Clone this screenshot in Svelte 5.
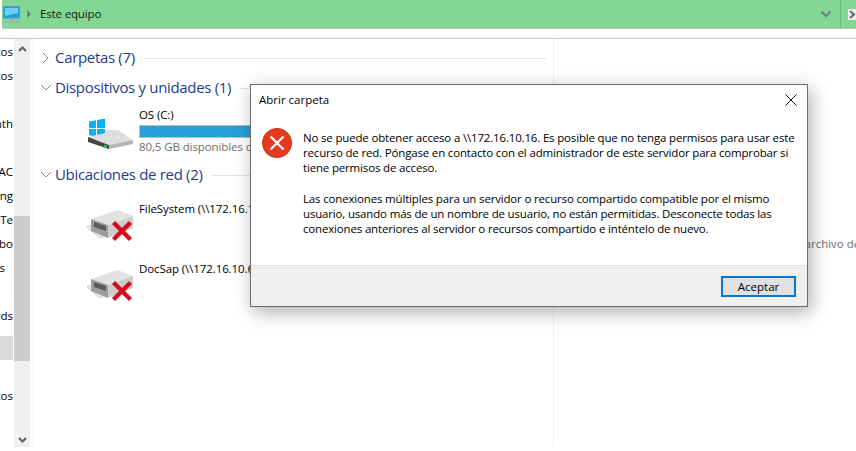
<script>
  // clipped tails of the navigation tree, the pane is scrolled sideways
  const navRows = [
    { text: "Documentos" }, { text: "Proyectos" }, { text: "" }, { text: "Month" },
    { text: "" }, { text: "MAC" }, { text: "Pricing" }, { text: "Te" }, { text: "Jobo" },
    { text: "Fotoss", short: true }, { text: "" }, { text: "Records" }
  ];
  const navRowsEnd = [{ text: "", selected: true }, { text: "" }, { text: "Documentos" }];

  const paragraphs = [
    [
      "No se puede obtener acceso a \\\\172.16.10.16. Es posible que no tenga permisos para usar este",
      "recurso de red. Póngase en contacto con el administrador de este servidor para comprobar si",
      "tiene permisos de acceso."
    ],
    [
      "Las conexiones múltiples para un servidor o recurso compartido compatible por el mismo",
      "usuario, usando más de un nombre de usuario, no están permitidas. Desconecte todas las",
      "conexiones anteriores al servidor o recursos compartido e inténtelo de nuevo."
    ]
  ];
</script>

{#snippet netDrive()}
  <svg class="drive" width="50" height="36" viewBox="0 0 50 36">
    <path d="M1 20l4-2 11 8 1 4-3 1z" fill="#efefef" stroke="#bdbdbd" stroke-width="0.8" />
    <path d="M5 12L32 3l15 6-25 9z" fill="#e2e2e2" />
    <path d="M5 12l17 6v13L5 24z" fill="#9c9c9c" />
    <path d="M22 18L47 9v12L22 31z" fill="#cdcdcd" />
    <path d="M8 15l12 4v5L8 20z" fill="#5a5a5a" />
    <path d="M27.500 15.500l17 17M44.500 15.500l-17 17" stroke="#d40e1d" stroke-width="4.400" />
  </svg>
{/snippet}

{#snippet sectionHead(title, open)}
  <div class="head">
    <svg class="caret" width="12" height="14" viewBox="0 0 12 14">
      {#if open}
        <path d="M1 4l5 5 5-5" />
      {:else}
        <path d="M3 2l5 5-5 5" />
      {/if}
    </svg>
    <span class="head-title">{title}</span>
    <span class="head-line"></span>
  </div>
{/snippet}

<div class="window">
  <header class="crumbs">
    <svg class="pc" width="17" height="17" viewBox="0 0 17 17">
      <rect x="0.5" y="0.5" width="16" height="11.500" fill="#1f9fe0" stroke="#5f97b8" />
      <path d="M2 2h13v5L2 10z" fill="#6fd0f5" />
      <path d="M6 12h5v2H6z" fill="#8fa3b0" />
      <path d="M1 15h15v1.500H1z" fill="#9db0bd" />
    </svg>
    <svg class="sep" width="6" height="8" viewBox="0 0 6 8"><path d="M1 0l4 4-4 4z" fill="#777" /></svg>
    <span class="crumb">Este equipo</span>
    <svg class="drop" width="12" height="8" viewBox="0 0 12 8"><path d="M1.500 1.500L6 6l4.500-4.500" /></svg>
    <span class="crumb-x">
      <svg width="8" height="11" viewBox="0 0 8 11"><path d="M2 2l4 3.500L2 9" /></svg>
    </span>
  </header>
  <div class="gap"></div>

  <div class="main">
    <nav class="tree">
      <div class="tree-rows">
        {#each navRows as row}
          <div class="tree-row" class:short={row.short}>{row.text}</div>
        {/each}
      </div>
      <div class="tree-rows end">
        {#each navRowsEnd as row}
          <div class="tree-row" class:selected={row.selected}>{row.text}</div>
        {/each}
      </div>
    </nav>

    <div class="scroll">
      <svg width="9" height="6" viewBox="0 0 9 6"><path d="M1 5l3.500-3.500L8 5" /></svg>
      <div class="thumb"></div>
      <svg width="9" height="6" viewBox="0 0 9 6"><path d="M1 1l3.500 3.500L8 1" /></svg>
    </div>

    <section class="content">
      {@render sectionHead("Carpetas (7)", false)}
      {@render sectionHead("Dispositivos y unidades (1)", true)}
      <div class="item os">
        <svg class="drive" width="50" height="36" viewBox="0 0 50 36">
          <path d="M1 3.500l7-1.200V10H1zM9 2l8-1.400V10H9zM1 11h7v7.500l-7-1.200zM9 11h8v9l-8-1.300z" fill="#0ab0f0" />
          <path d="M0 19l17-4v-3h13l15 10-24 5z" fill="#dedede" />
          <path d="M0 19l21 8v4L0 24z" fill="#474747" />
          <path d="M21 27l24-5v4l-24 5z" fill="#b4b4b4" />
          <rect x="16" y="27" width="3" height="2" fill="#2fc45a" />
        </svg>
        <div class="item-text">
          <div class="item-name">OS (C:)</div>
          <div class="bar"><div class="fill" style="width: 90%"></div></div>
          <div class="item-sub">80,5 GB disponibles de 237 GB</div>
        </div>
      </div>
      {@render sectionHead("Ubicaciones de red (2)", true)}
      <div class="item net">
        {@render netDrive()}
        <div class="item-name">FileSystem (\\172.16.10.16) (Z:)</div>
      </div>
      <div class="item net">
        {@render netDrive()}
        <div class="item-name">DocSap (\\172.16.10.6) (Y:)</div>
      </div>
    </section>

    <aside class="preview">Seleccione un archivo de</aside>
  </div>

  <div class="dialog" role="alertdialog">
    <div class="dlg-title">
      <span>Abrir carpeta</span>
      <svg width="12" height="12" viewBox="0 0 12 12"><path d="M.5.5l11 11M11.500.5l-11 11" /></svg>
    </div>
    <div class="dlg-body">
      <svg class="err" width="30" height="30" viewBox="0 0 30 30">
        <circle cx="15" cy="15" r="14.700" fill="#e6391f" />
        <circle cx="15" cy="15" r="14.500" fill="none" stroke="#c23a22" />
        <path d="M8.500 8.500l13 13M21.500 8.500l-13 13" stroke="#fff" stroke-width="2.300" />
      </svg>
      <div class="dlg-text">
        {#each paragraphs as lines}
          <p>
            {#each lines as line}
              <span class="line">{line}</span>
            {/each}
          </p>
        {/each}
      </div>
    </div>
    <div class="dlg-foot">
      <button>Aceptar</button>
    </div>
  </div>
</div>

<style>
  :global(body) {
    margin: 0;
    background: #fff;
  }

  .window {
    position: relative;
    width: 856px;
    height: 451px;
    overflow: hidden;
    font-family: "Open Sans", "Noto Sans", sans-serif;
    font-size: 11.5px;
    color: #000;
    display: flex;
    flex-direction: column;
  }

  .crumbs {
    height: 28px;
    margin-left: 2px;
    background: #83d795;
    border-bottom: 1px solid #c4c4c4;
    display: flex;
    align-items: center;
    flex-shrink: 0;
  }

  .pc {
    margin-left: 1px;
  }

  .sep {
    margin-left: 6px;
  }

  .crumb {
    margin: 0 0 2px 8px;
    letter-spacing: -0.15px;
    color: #101a10;
  }

  .drop {
    margin-left: auto;
    fill: none;
    stroke: #6f7f72;
    stroke-width: 2;
  }

  .crumb-x {
    margin-left: 8px;
    width: 15px;
    height: 100%;
    border-left: 1px solid #70b580;
    display: flex;
    align-items: center;
    justify-content: flex-end;
  }

  .crumb-x svg {
    background: #eee;
    fill: none;
    stroke: #666;
    stroke-width: 2;
  }

  .gap {
    height: 9px;
    border-bottom: 1px solid #c8c8c8;
    flex-shrink: 0;
  }

  .main {
    flex: 1;
    display: flex;
    min-height: 0;
    padding-bottom: 4px;
  }

  .tree {
    width: 13px;
    padding-top: 1px;
    flex-shrink: 0;
    overflow: hidden;
  }

  .tree-rows.end {
    margin-top: 8px;
  }

  .tree-row {
    height: 24px;
    line-height: 24px;
    display: flex;
    justify-content: flex-end;
    white-space: nowrap;
  }

  .tree-row.short {
    padding-right: 8px;
  }

  .tree-row.selected {
    background: #d9d9d9;
  }

  .scroll {
    width: 16px;
    margin-left: 1px;
    background: #f0f0f0;
    display: flex;
    flex-direction: column;
    align-items: center;
    flex-shrink: 0;
    padding: 7px 0 4px;
    box-sizing: border-box;
  }

  .scroll svg {
    fill: none;
    stroke: #606060;
    stroke-width: 2;
    flex-shrink: 0;
  }

  .thumb {
    width: 100%;
    height: 146px;
    margin: 164px 0 76px;
    background: #cdcdcd;
  }

  .content {
    width: 521px;
    margin-left: 3px;
    border-left: 1px solid #f2f2f2;
    border-right: 1px solid #f0f0f0;
    padding: 7px 7px 0 6px;
    box-sizing: border-box;
    flex-shrink: 0;
  }

  .head {
    height: 24px;
    margin-bottom: 6px;
    display: flex;
    align-items: center;
  }

  .caret {
    fill: none;
    stroke: #8a8a8a;
    stroke-width: 1;
    margin-right: 3px;
    flex-shrink: 0;
  }

  .head-title {
    font-size: 15px;
    letter-spacing: -0.32px;
    color: #1e3a8f;
    white-space: nowrap;
    margin-bottom: 2px;
  }

  .head-line {
    flex: 1;
    height: 1px;
    margin-left: 8px;
    background: #e3e3e3;
  }

  .item {
    display: flex;
    white-space: nowrap;
    letter-spacing: -0.1px;
  }

  .item .drive {
    flex-shrink: 0;
  }

  .item-text {
    width: 320px;
    margin-top: 1px;
  }

  .item.os {
    height: 57px;
    margin-left: 48px;
  }

  .item.os .drive {
    margin: 12px 1px 0 0;
  }

  .item.net {
    height: 60px;
    margin-left: 46px;
  }

  .item.net .item-name {
    margin-top: 8px;
  }

  .item.net .drive {
    margin: 14px 3px 0 0;
  }

  .item-name {
    line-height: 16px;
  }

  .bar {
    height: 11px;
    margin-top: 2px;
    border: 1px solid #bcbcbc;
    background: #e6e6e6;
  }

  .fill {
    height: 100%;
    background: #26a0da;
  }

  .item-sub {
    margin-top: 1px;
    color: #6d6d6d;
    line-height: 16px;
  }

  .preview {
    flex: 1;
    min-width: 0;
    display: flex;
    align-items: flex-end;
    padding: 0 0 196px 174px;
    white-space: nowrap;
    color: #6d6d6d;
    overflow: hidden;
  }

  .dialog {
    position: absolute;
    left: 250px;
    top: 84px;
    width: 558px;
    height: 223px;
    box-sizing: border-box;
    border: 1px solid #6b6b6b;
    background: #fff;
    box-shadow: 3px 5px 18px rgba(0, 0, 0, 0.32);
    display: flex;
    flex-direction: column;
  }

  .dlg-title {
    height: 29px;
    padding: 0 10px 0 8px;
    display: flex;
    align-items: center;
    justify-content: space-between;
  }

  .dlg-title svg {
    stroke: #111;
    stroke-width: 1;
    fill: none;
  }

  .dlg-body {
    flex: 1;
    display: flex;
    padding: 14px 0 0 11px;
  }

  .err {
    flex-shrink: 0;
  }

  .dlg-text {
    margin-left: 11px;
    padding-top: 2px;
    line-height: 15.200px;
    letter-spacing: -0.17px;
    white-space: nowrap;
  }

  .dlg-text p {
    margin: 0 0 15px;
  }

  .line {
    display: block;
  }

  .dlg-foot {
    height: 40px;
    background: #f0f0f0;
    border-top: 1px solid #dfdfdf;
    display: flex;
    align-items: center;
    justify-content: flex-end;
    padding-right: 11px;
    flex-shrink: 0;
  }

  button {
    width: 75px;
    height: 21px;
    box-sizing: border-box;
    border: 2px solid #0078d7;
    background: #e1e1e1;
    font: inherit;
    color: #000;
    padding: 0;
    line-height: 15px;
  }
</style>
